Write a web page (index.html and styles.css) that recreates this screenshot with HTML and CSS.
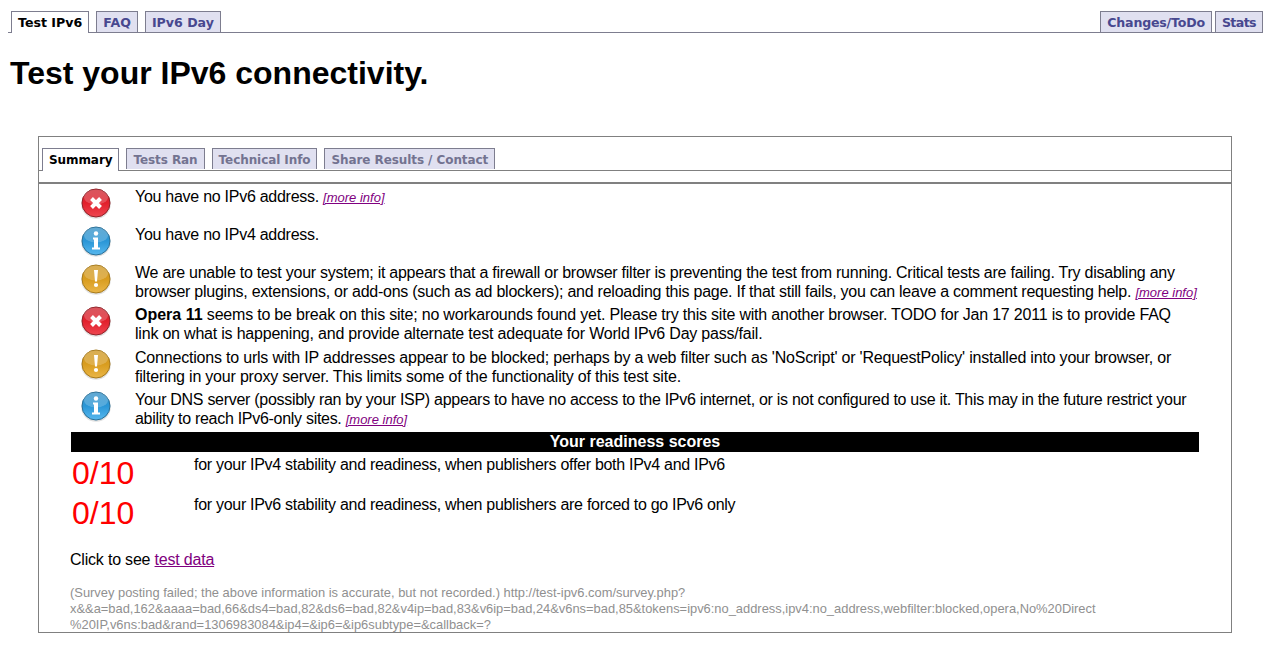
FILE: index.html
```html
<!DOCTYPE html>
<html lang="en">
<head>
<meta charset="utf-8">
<title>Test your IPv6 connectivity.</title>
<link rel="stylesheet" href="styles.css">
</head>
<body>
<svg class="defs" width="0" height="0" aria-hidden="true">
  <defs>
    <linearGradient id="redFill" x1="0" y1="0" x2="0" y2="1"><stop offset="0" stop-color="#cf2a34"/><stop offset=".5" stop-color="#e2202c"/><stop offset="1" stop-color="#ee4650"/></linearGradient>
    <linearGradient id="blueFill" x1="0" y1="0" x2="0" y2="1"><stop offset="0" stop-color="#3a94c8"/><stop offset=".5" stop-color="#2a96d6"/><stop offset="1" stop-color="#58b8ee"/></linearGradient>
    <linearGradient id="amberFill" x1="0" y1="0" x2="0" y2="1"><stop offset="0" stop-color="#cf9a2a"/><stop offset=".5" stop-color="#d89c1e"/><stop offset="1" stop-color="#eab648"/></linearGradient>
    <symbol id="bad" viewBox="0 0 32 32">
      <circle cx="16" cy="17" r="14.800" fill="#bbb" opacity=".45"/>
      <circle cx="16" cy="16" r="14" fill="url(#redFill)" stroke="#8e2228"/>
      <ellipse cx="16" cy="10" rx="12" ry="7.500" fill="#fff" opacity=".2"/>
      <path d="M11.500 11.500l9 9M20.500 11.500l-9 9" stroke="#fff" stroke-width="4"/>
    </symbol>
    <symbol id="info" viewBox="0 0 32 32">
      <circle cx="16" cy="17" r="14.800" fill="#bbb" opacity=".45"/>
      <circle cx="16" cy="16" r="14" fill="url(#blueFill)" stroke="#2a6f96"/>
      <ellipse cx="16" cy="10" rx="12" ry="7.500" fill="#fff" opacity=".2"/>
      <circle cx="16" cy="8.500" r="2.200" fill="#fff"/>
      <path d="M13 12.500h5v10h2v2h-8v-2h2v-8h-1z" fill="#fff"/>
    </symbol>
    <symbol id="warn" viewBox="0 0 32 32">
      <circle cx="16" cy="17" r="14.800" fill="#bbb" opacity=".45"/>
      <circle cx="16" cy="16" r="14" fill="url(#amberFill)" stroke="#a67a1c"/>
      <ellipse cx="16" cy="10" rx="12" ry="7.500" fill="#fff" opacity=".2"/>
      <path d="M14 7h4l-1 11.500h-2z" fill="#fff"/>
      <circle cx="16" cy="22" r="2.100" fill="#fff"/>
    </symbol>
  </defs>
</svg>
<nav class="site-tabs">
  <div class="tab-group">
    <a class="tab active" href="#">Test IPv6</a>
    <a class="tab" href="#">FAQ</a>
    <a class="tab" href="#">IPv6 Day</a>
  </div>
  <div class="tab-group tight">
    <a class="tab" href="#">Changes/ToDo</a>
    <a class="tab narrow" href="#">Stats</a>
  </div>
</nav>
<h1>Test your IPv6 connectivity.</h1>
<main class="panel">
  <div class="panel-tabs">
    <a class="tab active" href="#">Summary</a>
    <a class="tab" href="#">Tests Ran</a>
    <a class="tab" href="#">Technical Info</a>
    <a class="tab" href="#">Share Results / Contact</a>
  </div>
  <div class="results">
    <div class="row one"><svg class="icon"><use href="#bad"/></svg><p>You have no IPv6 address. <a class="more" href="#">[more info]</a></p></div>
    <div class="row one"><svg class="icon"><use href="#info"/></svg><p>You have no IPv4 address.</p></div>
    <div class="row two"><svg class="icon"><use href="#warn"/></svg><p>We are unable to test your system; it appears that a firewall or browser filter is preventing the test from running. Critical tests are failing. Try disabling any<br>browser plugins, extensions, or add-ons (such as ad blockers); and reloading this page. If that still fails, you can leave a comment requesting help. <a class="more" href="#">[more info]</a></p></div>
    <div class="row three"><svg class="icon"><use href="#bad"/></svg><p><b>Opera 11</b> seems to be break on this site; no workarounds found yet. Please try this site with another browser. TODO for Jan 17 2011 is to provide FAQ<br>link on what is happening, and provide alternate test adequate for World IPv6 Day pass/fail.</p></div>
    <div class="row two loose"><svg class="icon"><use href="#warn"/></svg><p>Connections to urls with IP addresses appear to be blocked; perhaps by a web filter such as 'NoScript' or 'RequestPolicy' installed into your browser, or<br>filtering in your proxy server. This limits some of the functionality of this test site.</p></div>
    <div class="row last"><svg class="icon"><use href="#info"/></svg><p>Your DNS server (possibly ran by your ISP) appears to have no access to the IPv6 internet, or is not configured to use it. This may in the future restrict your<br>ability to reach IPv6-only sites. <a class="more" href="#">[more info]</a></p></div>
    <div class="scores-title">Your readiness scores</div>
    <div class="score"><span class="value">0/10</span><span class="label">for your IPv4 stability and readiness, when publishers offer both IPv4 and IPv6</span></div>
    <div class="score"><span class="value">0/10</span><span class="label">for your IPv6 stability and readiness, when publishers are forced to go IPv6 only</span></div>
    <p class="see">Click to see <a href="#">test data</a></p>
    <p class="survey">(Survey posting failed; the above information is accurate, but not recorded.) http://test-ipv6.com/survey.php?<br>x&amp;&amp;a=bad,162&amp;aaaa=bad,66&amp;ds4=bad,82&amp;ds6=bad,82&amp;v4ip=bad,83&amp;v6ip=bad,24&amp;v6ns=bad,85&amp;tokens=ipv6:no_address,ipv4:no_address,webfilter:blocked,opera,No%20Direct<br>%20IP,v6ns:bad&amp;rand=1306983084&amp;ip4=&amp;ip6=&amp;ip6subtype=&amp;callback=?</p>
  </div>
</main>
</body>
</html>
```
FILE: styles.css
```css
* { box-sizing: border-box; }
html, body { height: 100%; }
body {
  margin: 0;
  padding: 11px 8px 0;
  background: #fff;
  color: #000;
  font-family: "Liberation Sans", Arial, sans-serif;
  font-size: 16px;
  overflow: hidden;
}
.defs { position: absolute; }
p { margin: 0; }
.site-tabs {
  display: flex;
  justify-content: space-between;
  height: 22px;
  border-bottom: 1px solid #7d7d8f;
  padding: 0 0 0 3px;
}
.tab-group { display: flex; gap: 7px; height: 22px; }
.tab-group.tight { gap: 3px; }
.tab-group.tight .tab { letter-spacing: -0.2px; }
.tab-group.tight .tab.narrow { letter-spacing: -0.6px; }
.tab {
  display: block;
  height: 21px;
  padding: 3px 6px 0;
  border: 1px solid #7d7d8f;
  border-bottom: 0;
  background: #e0e0f0;
  color: #48488f;
  font: bold 12.600px/16px "DejaVu Sans", Verdana, sans-serif;
  text-decoration: none;
  white-space: nowrap;
}
.tab.active {
  height: 22px;
  background: #fff;
  color: #000;
}
h1 {
  margin: 22px 0 0 2px;
  font-size: 32px;
  line-height: 37px;
  font-weight: bold;
}
.panel {
  height: 497px;
  margin: 44px 31px 0 30px;
  border: 1px solid #808080;
  overflow: hidden;
}
.panel-tabs {
  display: flex;
  gap: 7px;
  height: 34px;
  padding: 11px 0 0 3px;
  border-bottom: 1px solid #808080;
}
.panel-tabs .tab { color: #737390; height: 21px; font-size: 12px; letter-spacing: -0.08px; }
.panel-tabs .tab.active { color: #000; height: 23px; }
.results {
  margin-top: 11px;
  padding: 3px 32px 0 32px;
  border-top: 2px solid #808080;
}
.row { display: flex; align-items: flex-start; }
.row.one { height: 38px; }
.row.two { height: 42px; }
.row.three { height: 43px; }
.row.last { height: 42px; }
.row p { line-height: 19px; padding-left: 23px; flex: 1; white-space: nowrap; letter-spacing: -0.27px; }
.row.two p { letter-spacing: -0.25px; }
.row.two.loose p { letter-spacing: -0.2px; }
.row.three p { letter-spacing: -0.205px; }
.row.last p { letter-spacing: -0.29px; }
.row p b { letter-spacing: 0; }
.row p .more { letter-spacing: 0; }
.icon { width: 32px; height: 32px; margin-left: 9px; flex: none; }
.more { font-size: 13px; font-style: italic; color: #800080; }
.scores-title {
  height: 20px;
  background: #000;
  color: #fff;
  font-weight: bold;
  line-height: 20px;
  text-align: center;
}
.score { display: flex; height: 40px; }
.value {
  width: 123px;
  padding-left: 1px;
  color: #f00;
  font-size: 32px;
  line-height: 42px;
}
.label { line-height: 25px; letter-spacing: -0.29px; }
.see { margin-top: 18px; line-height: 19px; margin-left: -1px; letter-spacing: -0.2px; }
.see a { color: #800080; }
.survey {
  margin: 16px 0 0 -1px;
  color: #909090;
  font-size: 12.900px;
  line-height: 16px;
  white-space: nowrap;
}
```
